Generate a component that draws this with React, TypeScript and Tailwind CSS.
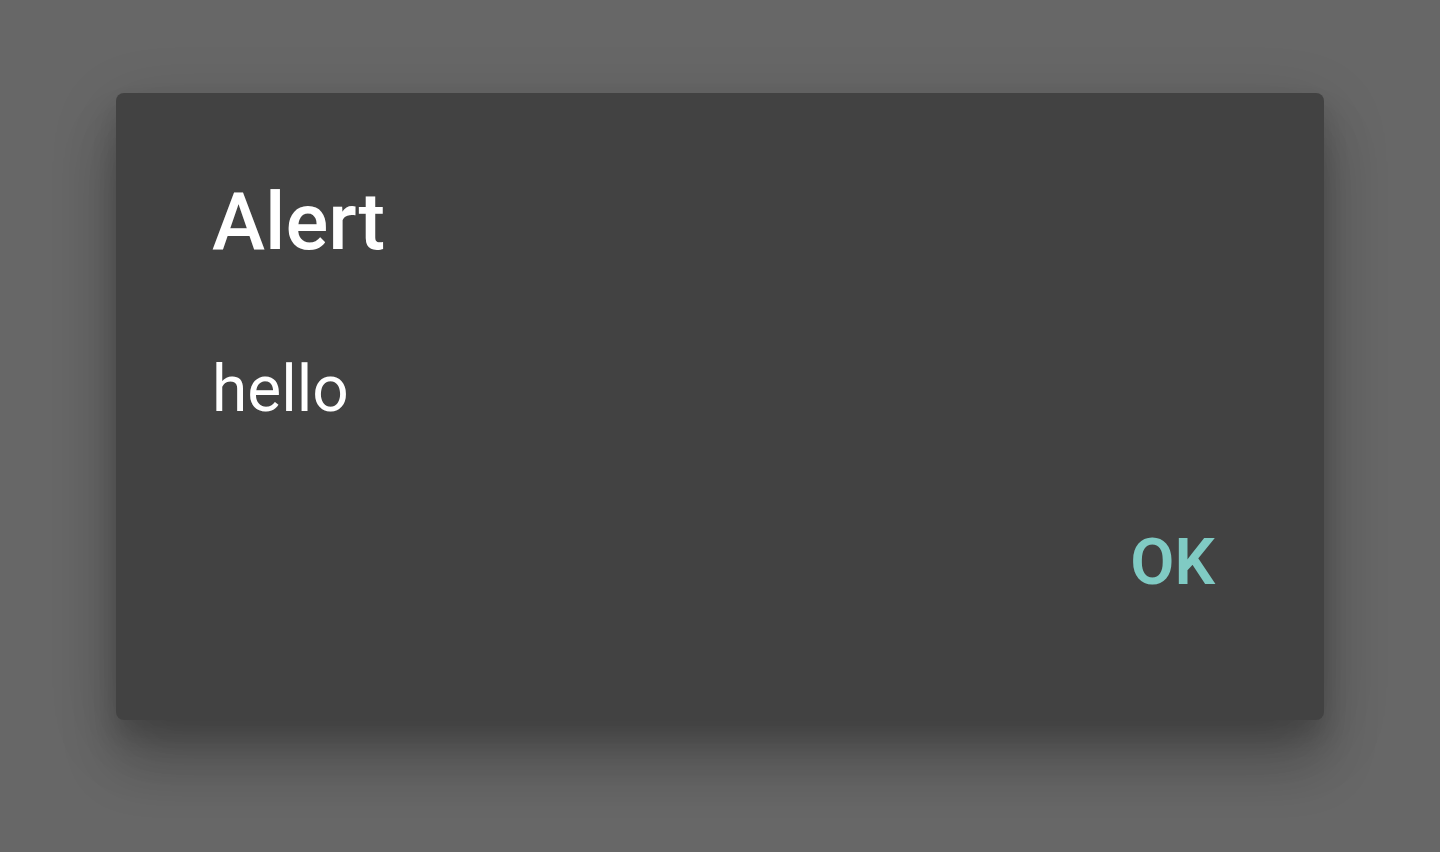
export default function App() {
  return (
    <div
      className="min-h-[852px] w-full bg-[#676767] pt-[93px]"
      style={{ fontFamily: "Roboto, 'Noto Sans', sans-serif" }}
    >
      <div className="mx-auto flex h-[627px] w-[1208px] flex-col rounded-[8px] bg-[#424242] pl-[96px] pr-[109px] pt-[89px] shadow-[0_44px_56px_rgba(0,0,0,0.2),0_18px_70px_rgba(0,0,0,0.14),0_16px_24px_rgba(0,0,0,0.12)]">
        <h1 className="text-[80px] font-medium leading-[80px] text-white">Alert</h1>
        <p className="mt-[96px] text-[64px] leading-[64px] text-white">hello</p>
        <div className="mt-auto flex justify-end pb-[125px]">
          <button type="button" className="text-[64px] font-semibold leading-[64px] text-[#80cbc4]">
            OK
          </button>
        </div>
      </div>
    </div>
  );
}
